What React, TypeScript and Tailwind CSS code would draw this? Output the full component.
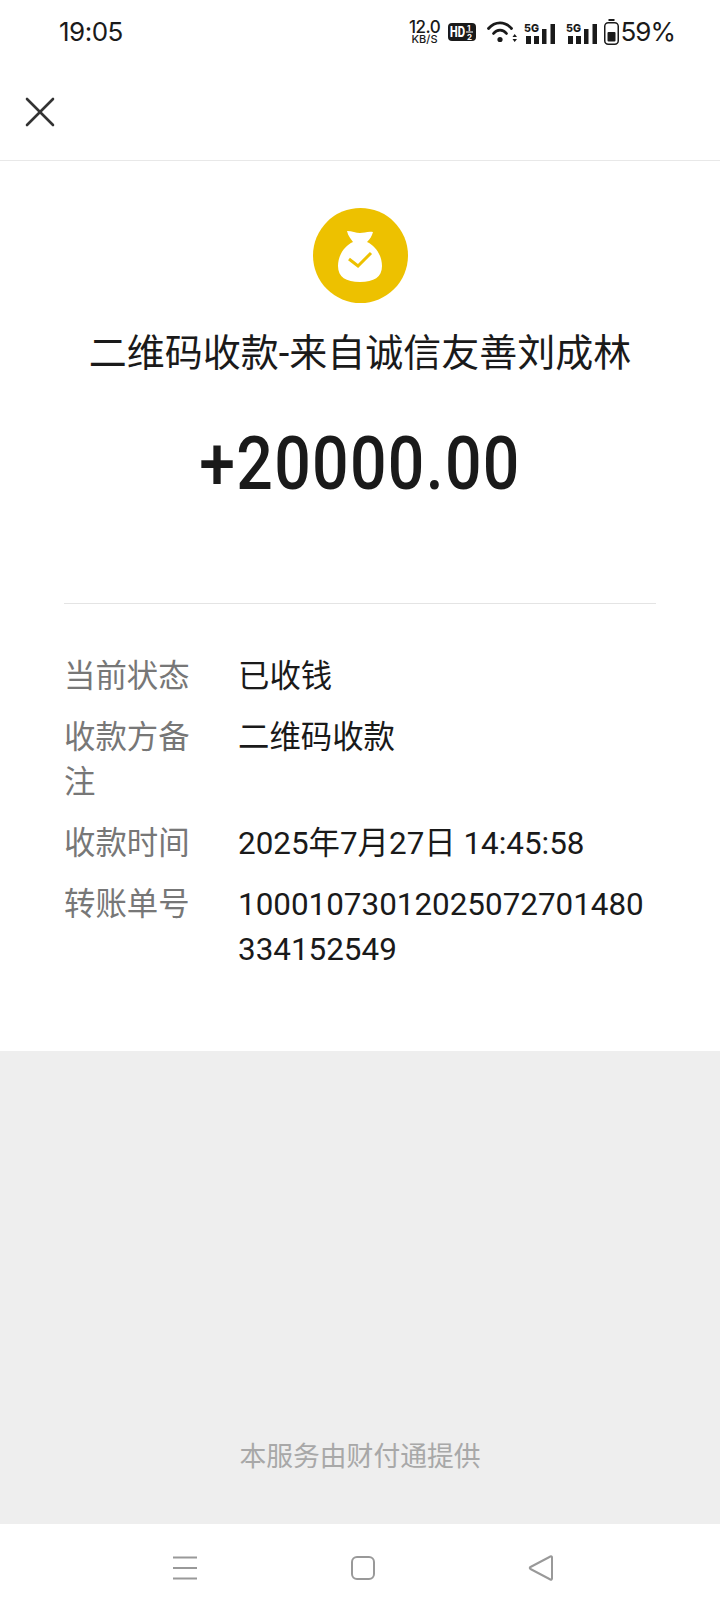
import { X } from 'lucide-react'

const rows = [
  { label: '当前状态', value: '已收钱' },
  { label: '收款方备注', value: '二维码收款' },
  { label: '收款时间', value: '2025年7月27日 14:45:58' },
  { label: '转账单号', value: '10001073012025072701480334152549' },
]

function Signal({ className }: { className: string }) {
  return (
    <svg className={className} width="31" height="23" viewBox="0 0 31 23">
      <text x="0" y="10.5" fontSize="11" fontWeight="800" fill="#1a1a1a" fontFamily="Inter" textLength="15" lengthAdjust="spacingAndGlyphs">5G</text>
      <rect x="2" y="15" width="5" height="8" fill="#1a1a1a" />
      <rect x="10" y="15" width="5" height="8" fill="#1a1a1a" />
      <rect x="18" y="8" width="4.5" height="15" fill="#1a1a1a" />
      <rect x="26.5" y="3" width="4.5" height="20" fill="#1a1a1a" />
    </svg>
  )
}

function StatusIcons() {
  return (
    <div className="flex items-center text-[#1a1a1a]">
      <div className="flex w-[32px] flex-col items-center font-['Inter'] leading-none">
        <span className="text-[17px] font-medium leading-[14px] tracking-[-0.5px]">12.0</span>
        <span className="text-[11px] font-medium leading-[10px]">KB/S</span>
      </div>
      <svg className="ml-[7px]" width="28" height="18" viewBox="0 0 28 18">
        <rect width="28" height="18" rx="4" fill="#1a1a1a" />
        <text x="2" y="14" fontSize="14" fontWeight="800" fill="#fff" fontFamily="Inter" textLength="15" lengthAdjust="spacingAndGlyphs">HD</text>
        <text x="19" y="8" fontSize="8" fontWeight="700" fill="#fff" fontFamily="Inter">1</text>
        <rect x="18" y="8.5" width="7" height="1" fill="#fff" />
        <text x="19" y="16.5" fontSize="8" fontWeight="700" fill="#fff" fontFamily="Inter">2</text>
      </svg>
      <svg className="ml-[11px]" width="30" height="22" viewBox="0 0 30 22" fill="none" stroke="#1a1a1a" strokeWidth="2.8" strokeLinecap="round">
        <path d="M1.5 7.5C8 0 18 0 24.5 7.5" />
        <path d="M6.5 12.5C10 8 16 8 19.5 12.5" />
        <circle cx="13" cy="18.5" r="2.6" fill="#1a1a1a" stroke="none" />
        <path d="M25.5 16l2.2-3 2.3 3zM25.5 18l2.200 3 2.300-3z" fill="#1a1a1a" stroke="none" />
      </svg>
      <Signal className="ml-[7px]" />
      <Signal className="ml-[11px]" />
      <svg className="ml-[7px]" width="15" height="26" viewBox="0 0 15 26" fill="none">
        <rect x="4.5" y="0" width="6" height="2" fill="#1a1a1a" />
        <rect x="0.75" y="3.75" width="13.5" height="21.5" rx="3.5" stroke="#1a1a1a" strokeWidth="1.5" />
        <rect x="3.5" y="13" width="8" height="9.5" rx="1" fill="#1a1a1a" />
      </svg>
      <span className="ml-[2px] font-['Inter'] text-[26px] leading-none tracking-[-1px]">59%</span>
    </div>
  )
}

export default function App() {
  return (
    <div className="flex h-[1612px] w-[720px] flex-col bg-white font-['Roboto','Noto_Sans_CJK_SC',sans-serif] text-[#1a1a1a]">
      <div className="flex h-[64px] items-center justify-between pl-[59px] pr-[45px]">
        <span className="font-['Inter'] text-[26px] leading-none tracking-[-0.5px]">19:05</span>
        <StatusIcons />
      </div>
      <div className="flex h-[97px] items-center border-b border-[#e8e8e8] pl-[14px]">
        <X className="h-[52px] w-[52px] text-[#333333]" strokeWidth={1.2} />
      </div>

      <div className="flex h-[890px] flex-col">
        <div className="mt-[47px] flex justify-center">
          <div className="flex h-[95px] w-[95px] items-center justify-center rounded-full bg-[#edc100]">
            <svg width="44" height="52" viewBox="0 0 44 52">
              <path
                d="M9 1c5 0 9 2 13 2 4 0 8-2 13-1-1 4-3 7-6 10 9 4 15 14 15 24 0 11-8 16-22 16S0 47 0 36c0-10 6-20 15-24C13 9 10 6 9 1z"
                fill="#fff"
              />
              <path d="M11 29l9 7 13-13" fill="none" stroke="#edc100" strokeWidth="3" />
            </svg>
          </div>
        </div>
        <div className="mt-[24px] text-center text-[38px] leading-[52px] font-normal">二维码收款-来自诚信友善刘成林</div>
        <div className="mt-[44px] scale-x-[0.87] text-center text-[74px] leading-[82px] font-medium tracking-[1.5px]">+20000.00</div>
        <div className="mx-[64px] mt-[98px] border-t border-[#e4e4e4]" />
        <div className="mt-[50px] flex flex-col gap-[16px] pl-[64px] pr-[64px] text-[31.4px] leading-[45px]">
          {rows.map((row) => (
            <div key={row.label} className="flex">
              <div className="mr-[24px] w-[150px] shrink-0 text-[#777777]">{row.label}</div>
              <div className="min-w-0 flex-1 break-all">{row.value}</div>
            </div>
          ))}
        </div>
      </div>

      <div className="flex flex-1 flex-col items-center justify-end bg-[#eeeeee] pb-[48px]">
        <span className="text-[26.8px] leading-[38px] text-[#a8a8a8]">本服务由财付通提供</span>
      </div>

      <div className="flex h-[88px] items-center gap-[152px] pl-[172px]">
        <svg width="26" height="24" viewBox="0 0 26 24" stroke="#999999" strokeWidth="2">
          <path d="M1 1.5h24M1 12h24M1 22.500h24" />
        </svg>
        <svg width="26" height="26" viewBox="0 0 26 26" fill="none" stroke="#999999" strokeWidth="2">
          <rect x="2" y="2" width="22" height="22" rx="5" />
        </svg>
        <svg width="26" height="26" viewBox="0 0 26 26" fill="none" stroke="#999999" strokeWidth="2" strokeLinejoin="round">
          <path d="M24 2.500c0-1-.8-1.400-1.600-1L2.500 12c-1 .5-1 1.500 0 2l19.900 10.500c.8.400 1.600 0 1.600-1z" />
        </svg>
      </div>
    </div>
  )
}
